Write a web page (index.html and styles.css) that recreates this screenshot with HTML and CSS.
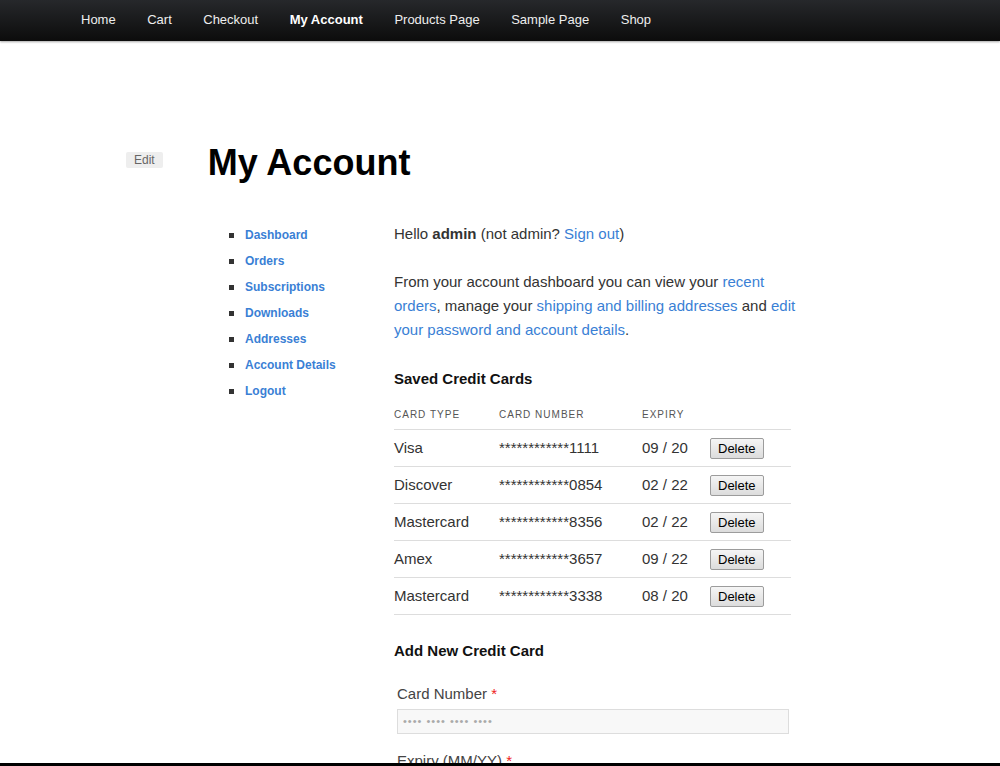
FILE: index.html
```html
<!DOCTYPE html>
<html lang="en">
<head>
<meta charset="utf-8">
<title>My Account</title>
<link rel="stylesheet" href="styles.css">
</head>
<body>
<header class="topbar">
  <nav>
    <ul class="menu">
      <li><a href="#">Home</a></li>
      <li><a href="#">Cart</a></li>
      <li><a href="#">Checkout</a></li>
      <li class="current"><a href="#">My Account</a></li>
      <li><a href="#">Products Page</a></li>
      <li><a href="#">Sample Page</a></li>
      <li><a href="#">Shop</a></li>
    </ul>
  </nav>
</header>

<main class="page">
  <div class="title-row">
    <a class="edit" href="#">Edit</a>
    <h1>My Account</h1>
  </div>

  <div class="account">
    <ul class="account-nav">
      <li><a href="#">Dashboard</a></li>
      <li><a href="#">Orders</a></li>
      <li><a href="#">Subscriptions</a></li>
      <li><a href="#">Downloads</a></li>
      <li><a href="#">Addresses</a></li>
      <li><a href="#">Account Details</a></li>
      <li><a href="#">Logout</a></li>
    </ul>

    <div class="account-content">
      <p>Hello <strong>admin</strong> (not admin? <a href="#">Sign out</a>)</p>
      <p class="intro">From your account dashboard you can view your <a href="#">recent orders</a>, manage your <a href="#">shipping and billing addresses</a> and <a href="#">edit your password and account details</a>.</p>

      <h3>Saved Credit Cards</h3>
      <table class="cards">
        <colgroup>
          <col class="c-type"><col class="c-num"><col class="c-exp"><col class="c-act">
        </colgroup>
        <thead>
          <tr><th>Card Type</th><th>Card Number</th><th>Expiry</th><th></th></tr>
        </thead>
        <tbody>
          <tr><td>Visa</td><td>************1111</td><td>09 / 20</td><td><button class="btn">Delete</button></td></tr>
          <tr><td>Discover</td><td>************0854</td><td>02 / 22</td><td><button class="btn">Delete</button></td></tr>
          <tr><td>Mastercard</td><td>************8356</td><td>02 / 22</td><td><button class="btn">Delete</button></td></tr>
          <tr><td>Amex</td><td>************3657</td><td>09 / 22</td><td><button class="btn">Delete</button></td></tr>
          <tr><td>Mastercard</td><td>************3338</td><td>08 / 20</td><td><button class="btn">Delete</button></td></tr>
        </tbody>
      </table>

      <h3 class="add-title">Add New Credit Card</h3>
      <form class="card-form">
        <label class="field-label" for="cc">Card Number <span class="req">*</span></label>
        <input class="field-input" id="cc" type="text" placeholder="•••• •••• •••• ••••">
        <label class="field-label next" for="exp">Expiry (MM/YY) <span class="req">*</span></label>
      </form>
    </div>
  </div>
</main>
<div class="bottom-edge"></div>
</body>
</html>
```

FILE: styles.css
```css
* { box-sizing: border-box; }

body {
  margin: 0;
  font-family: "Liberation Sans", Arial, sans-serif;
  color: #333;
  background: #fff;
}

a { color: #3a7fd5; text-decoration: none; }

/* top bar */
.topbar {
  height: 41px;
  background: linear-gradient(#26282b, #0c0c0c);
  box-shadow: 0 1px 2px rgba(0,0,0,0.35);
}
.menu {
  list-style: none;
  margin: 0;
  padding: 0 0 0 81px;
  display: flex;
  gap: 31.5px;
}
.menu a {
  display: block;
  color: #eee;
  font-size: 13px;
  line-height: 39px;
}
.menu .current a { font-weight: bold; color: #fff; }

/* page */
.page { padding: 100px 0 0 126px; }

.title-row { display: flex; align-items: flex-start; }
.edit {
  margin-top: 11px;
  padding: 0 8px;
  background: #eee;
  border-radius: 2px;
  color: #666;
  font-size: 12px;
  line-height: 16px;
}
h1 {
  margin: 0 0 0 45px;
  font-size: 36px;
  line-height: 43px;
  font-weight: bold;
  color: #000;
}

.account {
  display: flex;
  margin-top: 38px;
}

.account-nav {
  list-style: none;
  margin: 0 0 0 103px;
  padding: 0;
  width: 165px;
}
.account-nav li {
  display: flex;
  align-items: center;
  height: 26px;
}
.account-nav li::before {
  content: "";
  width: 5px;
  height: 5px;
  background: #333;
  margin-right: 11px;
}
.account-nav a {
  font-size: 12px;
  font-weight: bold;
  line-height: 26px;
}

.account-content {
  width: 397px;
  font-size: 15px;
  line-height: 24px;
}
.account-content p { margin: 0 0 24px; }
.account-content .intro { width: 410px; margin-bottom: 25px; }

h3 {
  margin: 0;
  font-size: 15px;
  line-height: 24px;
  font-weight: bold;
  color: #111;
}

.cards {
  width: 397px;
  margin-top: 11px;
  border-collapse: collapse;
  table-layout: fixed;
}
.c-type { width: 105px; }
.c-num { width: 143px; }
.c-exp { width: 68px; }
.c-act { width: 81px; }

.cards th {
  text-align: left;
  font-size: 10px;
  font-weight: normal;
  letter-spacing: 1px;
  text-transform: uppercase;
  color: #555;
  height: 27px;
  padding: 0 0 1px;
  border-bottom: 1px solid #ddd;
}
.cards td {
  height: 37px;
  padding: 0;
  border-bottom: 1px solid #ddd;
  color: #333;
  vertical-align: middle;
}

.btn {
  font-family: "Liberation Sans", Arial, sans-serif;
  font-size: 13px;
  line-height: 17px;
  padding: 1px 7px;
  color: #000;
  border: 1px solid #9c9c9c;
  border-radius: 2px;
  background: linear-gradient(#f5f5f5, #dcdcdc);
}

.add-title { margin-top: 24px; }

.card-form {
  display: flex;
  flex-direction: column;
  padding: 19px 2px 0 3px;
}
.field-label { color: #444; line-height: 24px; }
.req { color: #e22; }
.field-input {
  margin-top: 3px;
  width: 392px;
  height: 25px;
  padding: 0 5px;
  border: 1px solid #ddd;
  background: #f8f8f8;
  font-family: "Liberation Sans", Arial, sans-serif;
  font-size: 11px;
  letter-spacing: 1px;
}
.field-input::placeholder { color: #aaa; }
.field-label.next { margin-top: 15px; }

.bottom-edge {
  position: fixed;
  left: 0;
  right: 0;
  bottom: 0;
  height: 3px;
  background: #000;
}
```
